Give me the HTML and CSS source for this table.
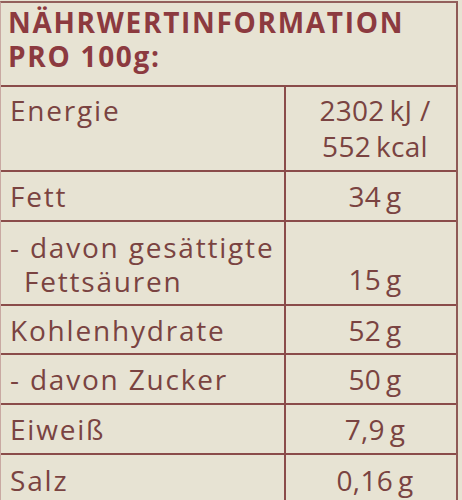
FILE: index.html
```html
<!DOCTYPE html>
<html lang="de">

<head>

  <meta charset="UTF-8">
  <meta name="viewport" content="width=device-width, initial-scale=1.0">

  <title>Nährwertinformation</title>

  <link rel="stylesheet" href="styles.css">

</head>

<body>

  <section class="label">
    <header class="label_head">
      <h1><span class="line">NÄHRWERTINFORMATION</span><span class="line">PRO 100g:</span></h1>
    </header>
    <table class="label_table">
      <tbody>
        <tr class="tall energy">
          <td class="name">Energie</td>
          <td class="value"><span class="line">2302&#8201;kJ /</span><span class="line">552&#8201;kcal</span></td>
        </tr>
        <tr>
          <td class="name">Fett</td>
          <td class="value">34&#8201;g</td>
        </tr>
        <tr class="tall">
          <td class="name"><span class="line">- davon gesättigte</span><span class="line indent">Fettsäuren</span></td>
          <td class="value bottom">15&#8201;g</td>
        </tr>
        <tr class="short">
          <td class="name">Kohlenhydrate</td>
          <td class="value">52&#8201;g</td>
        </tr>
        <tr>
          <td class="name">- davon Zucker</td>
          <td class="value">50&#8201;g</td>
        </tr>
        <tr>
          <td class="name">Eiweiß</td>
          <td class="value">7,9&#8201;g</td>
        </tr>
        <tr>
          <td class="name">Salz</td>
          <td class="value">0,16&#8201;g</td>
        </tr>
      </tbody>
    </table>
  </section>

</body>

</html>
```

FILE: styles.css
```css
* {
  box-sizing: border-box;
}
body {
  margin: 0;
  background-color: #e7e3d3;
  font-family: "Open Sans", sans-serif;
  color: #7a4341;
}
.label {
  width: 458px;
  height: 500px;
  margin-top: 1px;
  border-top: 2px solid #93605c;
  border-left: 1px solid #c9a9a2;
  border-right: 2px solid #8f5a56;
  overflow: hidden;
}
.line {
  display: block;
}
.label_head {
  height: 84px;
  padding: 2px 0 0 7px;
  border-bottom: 2px solid #8a4c4a;
}
.label_head h1 {
  margin: 0;
  font-size: 28px;
  font-weight: 700;
  line-height: 34px;
  letter-spacing: 1.7px;
  color: #8c3a3f;
}
.label_table {
  width: 100%;
  border-collapse: collapse;
  table-layout: fixed;
}
.label_table td {
  height: 50px;
  padding: 0;
  border-top: 2px solid #8a4c4a;
  font-size: 28px;
  line-height: 34px;
  letter-spacing: 1.8px;
  vertical-align: middle;
}
.label_table tr:first-child td {
  border-top: 0;
}
.label_table tr.short td {
  height: 49px;
}
.label_table tr.tall td {
  height: 84px;
  vertical-align: top;
  padding-top: 8px;
}
.label_table tr.energy td {
  line-height: 36px;
  padding-top: 5px;
}
.label_table .name {
  width: 284px;
  padding-left: 9px;
  border-right: 2px solid #8a4c4a;
}
.label_table .indent {
  padding-left: 14px;
}
.label_table .value {
  text-align: center;
  padding-left: 8px;
  letter-spacing: 0.3px;
}
.label_table tr.tall .bottom {
  padding-top: 40px;
}
```
